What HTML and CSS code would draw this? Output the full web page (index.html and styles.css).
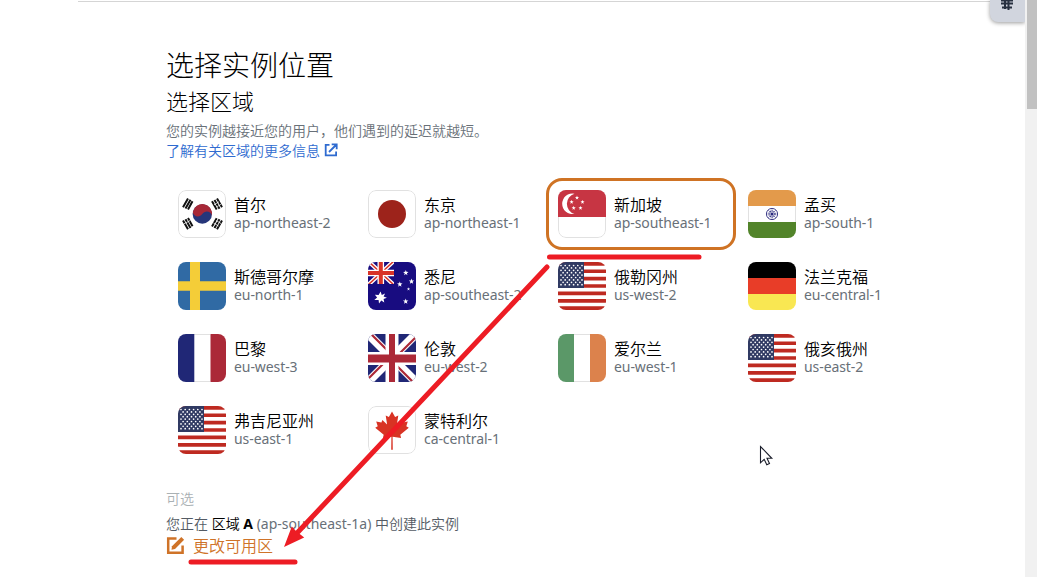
FILE: index.html
```
<!DOCTYPE html>
<html lang="zh-CN">
<head>
<meta charset="utf-8">
<title>选择实例位置</title>
<link rel="stylesheet" href="styles.css">
</head>
<body>
<svg class="defs" width="0" height="0" aria-hidden="true">
  <defs>
    <path id="star" d="M0-1 .23-.32.95-.31.37.12.59.81 0 .4-.59.81-.37.12-.95-.31-.23-.32z"/>
    <symbol id="us" viewBox="0 0 48 48">
      <path fill="#fff" d="M0 0h48v48H0z"/>
      <path stroke="#be2a21" stroke-width="3.7" d="M0 1.85h48M0 9.23h48M0 16.6h48M0 24h48M0 31.4h48M0 38.8h48M0 46.15h48"/>
      <path fill="#303a63" d="M0 0h26v26H0z"/>
      <path stroke="#fff" stroke-width="1.7" stroke-linecap="round" stroke-dasharray="0 4.2" d="M3 3.500h21.500M3 8.300h21.500M3 13.100h21.500M3 17.900h21.500M3 22.700h21.500"/>
      <path stroke="#fff" stroke-width="1.7" stroke-linecap="round" stroke-dasharray="0 4.2" d="M5.100 5.900h17M5.100 10.700h17M5.100 15.500h17M5.100 20.300h17"/>
    </symbol>
  </defs>
</svg>

<div class="page">
  <main class="content">
    <h1>选择实例位置</h1>
    <h2>选择区域</h2>
    <p class="hint">您的实例越接近您的用户，他们遇到的延迟就越短。</p>
    <a class="more">了解有关区域的更多信息
      <svg width="14" height="14" viewBox="0 0 14 14" fill="none" stroke="#2f6bd0" stroke-width="1.8"><path d="M5.5 1.900H1.700v10.400h10.400V8.500M5 9l7-7M7.700 1.300h5v5"/></svg>
    </a>

    <div class="regions">
      <div class="region">
        <svg class="flag" viewBox="0 0 48 48"><path fill="#fff" d="M0 0h48v48H0z"/>
          <circle cx="24.3" cy="24" r="9.7" fill="#26367a"/>
          <path fill="#a72837" d="M14.8 22a9.7 9.7 0 0 1 19.1 3.5c-1.2-5-7.4-5.2-9.6-1.5-2.6 4-8.800 3-9.500-2z"/>
          <g stroke="#111" stroke-width="2"><path d="M5 17.200 10 8.400M7.500 18.500l5-8.800M10 19.500l4.500-8.200"/><path d="M34 11.300l4.700 8.200M36.500 9.900l5 8.800M39 8.500l5 8.800"/><path d="M5 30.500l5 8.800M7.500 29.200l5 8.800M10 28l4.500 8.200"/><path d="M34 36.500l4.700-8.200M36.500 38l5-8.800M39 39.200l5-8.800"/></g>
          <path stroke="#fff" stroke-width=".7" d="M36 14.800l5-3M38.500 17l4.500-2.700M35.500 33l5 3M38 30.500l5 3M6 33.800l6.500-3.500"/>
          <rect class="edge" x=".5" y=".5" width="47" height="47" rx="7.500"/></svg>
        <div><b>首尔</b><span>ap-northeast-2</span></div>
      </div>
      <div class="region">
        <svg class="flag" viewBox="0 0 48 48"><path fill="#fff" d="M0 0h48v48H0z"/><circle cx="24" cy="24" r="14" fill="#9d231b"/><rect class="edge" x=".5" y=".5" width="47" height="47" rx="7.500"/></svg>
        <div><b>东京</b><span>ap-northeast-1</span></div>
      </div>
      <div class="region selected">
        <svg class="flag" viewBox="0 0 48 48"><path fill="#fff" d="M0 0h48v48H0z"/><rect class="edge" x=".5" y=".5" width="47" height="47" rx="7.500"/><path fill="#c73543" d="M0 0h48v27H0z"/>
          <path fill="#fff" d="M16.500 3.700a10.300 10.300 0 1 0 0 20.200 10.500 10.500 0 0 1 0-20.200z"/>
          <g fill="#fff"><use href="#star" transform="translate(19 7.800) scale(2.200)"/><use href="#star" transform="translate(13.600 12) scale(2.200)"/><use href="#star" transform="translate(24.500 12) scale(2.200)"/><use href="#star" transform="translate(15.700 18) scale(2.200)"/><use href="#star" transform="translate(22.500 18) scale(2.200)"/></g></svg>
        <div><b>新加坡</b><span>ap-southeast-1</span></div>
      </div>
      <div class="region">
        <svg class="flag" viewBox="0 0 48 48"><path fill="#fff" d="M0 0h48v48H0z"/><path fill="#e39a4b" d="M0 0h48v16H0z"/><path fill="#52842a" d="M0 32h48v16H0z"/><path stroke="#e1e1e1" d="M.5 16v16M47.500 16v16"/>
          <g fill="none" stroke="#403f8b"><circle cx="24" cy="24" r="5.600"/><circle cx="24" cy="24" r="3" stroke-width="1.300" stroke-dasharray="1.200 .7"/><path stroke-width=".4" d="M18.500 24h11M24 18.500v11M20 20l8 8M28 20l-8 8"/></g><circle cx="24" cy="24" r="1.500" fill="#29297e"/></svg>
        <div><b>孟买</b><span>ap-south-1</span></div>
      </div>
      <div class="region">
        <svg class="flag" viewBox="0 0 48 48"><path fill="#306aa4" d="M0 0h48v48H0z"/><path fill="#f4cd38" d="M12 0h10v48H12z"/><path fill="#f4cd38" d="M0 19.200h48v9.600H0z"/></svg>
        <div><b>斯德哥尔摩</b><span>eu-north-1</span></div>
      </div>
      <div class="region">
        <svg class="flag" viewBox="0 0 48 48"><path fill="#180c80" d="M0 0h48v48H0z"/>
          <svg width="26" height="22" viewBox="0 0 26 22"><path stroke="#fff" stroke-width="4.200" d="m0-1 26 24M26-1 0 23"/><path stroke="#d83328" stroke-width="1.500" d="m0-1 26 24M26-1 0 23"/><path stroke="#fff" stroke-width="6.600" d="M12.800 0v22M0 11h26"/><path stroke="#d83328" stroke-width="4" d="M12.800 0v22M0 11h26"/></svg>
          <g fill="#fff"><path d="m12.600 29.500 1.200 3.400 3.300-1.500-1.500 3.200 3.300 1.200-3.300 1.200.7 3.600-3-2-2.300 3-.4-3.700-4.300.1 2.800-2.500-2.200-2.800 3.700.2z"/><use href="#star" transform="translate(37.800 10.800) scale(2.900)"/><use href="#star" transform="translate(31.800 22.300) scale(2.900)"/><use href="#star" transform="translate(43.500 19.500) scale(2.900)"/><use href="#star" transform="translate(40.500 27) scale(1.700)"/><use href="#star" transform="translate(37.700 39.500) scale(2.900)"/></g></svg>
        <div><b>悉尼</b><span>ap-southeast-2</span></div>
      </div>
      <div class="region">
        <svg class="flag"><use href="#us"/></svg>
        <div><b>俄勒冈州</b><span>us-west-2</span></div>
      </div>
      <div class="region">
        <svg class="flag" viewBox="0 0 48 48"><path d="M0 0h48v16H0z"/><path fill="#e83d28" d="M0 16h48v16H0z"/><path fill="#f9e752" d="M0 32h48v16H0z"/></svg>
        <div><b>法兰克福</b><span>eu-central-1</span></div>
      </div>
      <div class="region">
        <svg class="flag" viewBox="0 0 48 48"><path fill="#fff" d="M0 0h48v48H0z"/><path stroke="#e1e1e1" d="M16 .5h16M16 47.500h16"/><path fill="#202776" d="M0 0h16.300v48H0z"/><path fill="#ab2938" d="M32.500 0H48v48H32.500z"/></svg>
        <div><b>巴黎</b><span>eu-west-3</span></div>
      </div>
      <div class="region">
        <svg class="flag" viewBox="0 0 48 48"><path fill="#202776" d="M0 0h48v48H0z"/><path stroke="#fff" stroke-width="8.500" d="m0 0 48 48M48 0 0 48"/><path stroke="#ac2937" stroke-width="2.200" d="M1.500-1.500 24 21M49.500 1.500 27 24M-1.500 46.500 21 24M46.500 49.500 24 27"/><path stroke="#fff" stroke-width="13" d="M24 0v48M0 24.500h48"/><path stroke="#ac2937" stroke-width="6" d="M24 0v48"/><path stroke="#ac2937" stroke-width="8" d="M0 24.500h48"/></svg>
        <div><b>伦敦</b><span>eu-west-2</span></div>
      </div>
      <div class="region">
        <svg class="flag" viewBox="0 0 48 48"><path fill="#fff" d="M0 0h48v48H0z"/><path stroke="#e1e1e1" d="M16 .5h16M16 47.500h16"/><path fill="#5b9868" d="M0 0h16v48H0z"/><path fill="#dc824c" d="M32 0h16v48H32z"/></svg>
        <div><b>爱尔兰</b><span>eu-west-1</span></div>
      </div>
      <div class="region">
        <svg class="flag"><use href="#us"/></svg>
        <div><b>俄亥俄州</b><span>us-east-2</span></div>
      </div>
      <div class="region">
        <svg class="flag"><use href="#us"/></svg>
        <div><b>弗吉尼亚州</b><span>us-east-1</span></div>
      </div>
      <div class="region">
        <svg class="flag" viewBox="0 0 48 48"><path fill="#fff" d="M0 0h48v48H0z"/><rect class="edge" x=".5" y=".5" width="47" height="47" rx="7.500"/><path fill="#d83324" d="m24 5.500 3.100 5.500 3.200-1.500-1.400 9 4.700-4.500 1 2.500 5.200-1-1.500 4.800 2.500 1.500-8.500 7 .8 3.200-8.500-1.300.2 13h-1.600l.2-13-8.500 1.300.8-3.200-8.500-7 2.500-1.500-1.500-4.800 5.200 1 1-2.500 4.700 4.500-1.400-9 3.200 1.500z"/></svg>
        <div><b>蒙特利尔</b><span>ca-central-1</span></div>
      </div>
    </div>

    <p class="optional">可选</p>
    <p class="zone">您正在 <b>区域 <strong>A</strong></b> <span>(ap-southeast-1a)</span> 中创建此实例</p>
    <a class="change">
      <svg width="19" height="19" viewBox="0 0 19 19" fill="none" stroke="#cf7328" stroke-width="2.500"><path d="M10.500 2.400H2.200v14.300h14.400V9.500"/><path fill="#cf7328" stroke="none" d="m5.500 13.700.5-3.500L15.300 1l2.800 2.800L9 13z"/></svg>
      更改可用区
    </a>
  </main>
  <div class="widget"><svg width="14" height="11" viewBox="0 0 14 11"><path stroke="#283141" stroke-width="2" d="M1 .500h12M1 3.500h12M2 7.500h10M5 0v9M8.500 1v9"/></svg></div>
  <div class="scrollbar"><div class="thumb"></div></div>
</div>

<svg class="overlay" width="1037" height="577" viewBox="0 0 1037 577">
  <g stroke="#ed1c24" stroke-width="5" stroke-linecap="round"><path d="M549.500 257H699M191 562h104M547 267 298 532"/></g>
  <path fill="#ed1c24" d="m284 547 7.800-20.500 4.200 4.500 8.200 6.500z"/>
  <path fill="#fff" stroke="#1b1e2b" stroke-width="1.100" d="M760.500 446.500v16.300l3.700-3.500 2.600 5.500 2.700-1.200-2.500-5.300h4.800z"/>
</svg>
</body>
</html>
```
FILE: styles.css
```
* { box-sizing: border-box; }
body {
  margin: 0;
  height: 577px;
  overflow: hidden;
  background: #fff;
  color: #16191f;
  font-family: "Noto Sans", "Noto Sans CJK SC", sans-serif;
}
.defs { position: absolute; }
.page { display: flex; height: 577px; }
.content {
  flex: none;
  width: 912px;
  height: 576px;
  margin: 1px 0 0 78px;
  padding: 43px 0 0 88px;
  border-top: 1px solid #d5d5d5;
}
h1, h2, p { margin: 0; font-weight: 350; white-space: nowrap; }
h1, h2, .hint, .more, .optional, .change, .region b { font-family: "Noto Sans CJK SC", sans-serif; }
h1, h2 { font-weight: 300; color: #000; }
h1 { font-size: 28px; line-height: 38px; }
h2 { font-size: 22px; line-height: 34px; }
.hint { color: #687078; font-size: 14px; line-height: 20px; margin-top: 3px; }
.more {
  display: flex;
  align-items: center;
  gap: 4px;
  color: #2f6bd0;
  font-size: 14px;
  font-weight: 350;
  line-height: 20px;
}
.regions {
  display: grid;
  grid-template-columns: repeat(4, 190px);
  grid-auto-rows: 72px;
  margin-top: 18px;
}
.region {
  display: flex;
  gap: 8px;
  padding: 9px;
  border: 3px solid transparent;
  border-radius: 16px;
}
.selected { border-color: #cf7324; }
.flag { flex: none; width: 48px; height: 48px; border-radius: 8px; overflow: hidden; }
.edge { fill: none; stroke: #e1e1e1; }
.region b, .region span { display: block; white-space: nowrap; }
.region b { margin-top: 4px; font-size: 16px; font-weight: 350; line-height: 20px; color: #000; }
.region span { margin-top: 1px; font-size: 14px; letter-spacing: -.08px; line-height: 16px; color: #687078; }
.optional { margin-top: 22px; color: #aab1b4; font-size: 14px; line-height: 20px; }
.zone { margin-top: 6px; color: #545b64; font-size: 14px; line-height: 20px; }
.zone b { color: #000; font-weight: 350; }
.zone strong { font-weight: 700; }
.zone span { font-weight: 400; color: #687078; }
.change {
  display: flex;
  align-items: center;
  gap: 8px;
  color: #cf7328;
  font-size: 16px;
  font-weight: 350;
  line-height: 22px;
}
.widget {
  width: 35px;
  height: 22px;
  padding-left: 10px;
  border-radius: 0 0 0 8px;
  background: #d1d5de;
  box-shadow: 0 1px 4px #0006;
}
.widget svg { display: block; }
.scrollbar { position: relative; width: 12px; height: 577px; padding-left: 2px; background: #f1f1f1; }
.thumb { height: 109px; background: #c1c1c1; }
.overlay { position: absolute; left: 0; top: 0; pointer-events: none; }
```
